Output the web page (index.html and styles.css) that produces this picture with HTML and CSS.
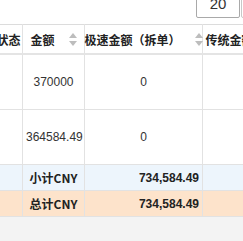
FILE: index.html
```html
<!DOCTYPE html>
<html lang="zh">
<head>
<meta charset="utf-8">
<link rel="stylesheet" href="styles.css">
</head>
<body>
<div class="page">
  <div class="toolbar">
    <div class="page-size">20</div>
    <div class="page-next"></div>
  </div>
  <table class="grid">
    <colgroup>
      <col class="c-status">
      <col class="c-amount">
      <col class="c-fast">
      <col class="c-trad">
    </colgroup>
    <thead>
      <tr>
        <th>状态</th>
        <th><div class="th-in"><span>金额</span><span class="sort"><i class="up"></i><i class="down"></i></span></div></th>
        <th><div class="th-in"><span>极速金额（拆单）</span><span class="sort"><i class="up"></i><i class="down"></i></span></div></th>
        <th><div class="th-in"><span>传统金额</span><span class="sort"><i class="up"></i><i class="down"></i></span></div></th>
      </tr>
    </thead>
    <tbody>
      <tr class="data">
        <td></td>
        <td class="center">370000</td>
        <td class="center">0</td>
        <td></td>
      </tr>
      <tr class="data">
        <td></td>
        <td class="center">364584.49</td>
        <td class="center">0</td>
        <td></td>
      </tr>
      <tr class="subtotal">
        <td></td>
        <td class="center label">小计CNY</td>
        <td class="right num">734,584.49</td>
        <td></td>
      </tr>
      <tr class="total">
        <td></td>
        <td class="center label">总计CNY</td>
        <td class="right num">734,584.49</td>
        <td></td>
      </tr>
    </tbody>
  </table>
  <div class="footer"></div>
</div>
</body>
</html>
```
FILE: styles.css
```css
html, body {
  margin: 0;
  padding: 0;
  background: #ffffff;
  overflow: hidden;
}
.page {
  width: 243px;
  height: 241px;
  overflow: hidden;
  font-family: "Liberation Sans", "Noto Sans CJK SC", Arial, sans-serif;
  font-size: 12px;
  color: #333333;
}
.toolbar {
  display: flex;
  justify-content: flex-end;
  gap: 1px;
  height: 28px;
  margin-top: -10px;
  margin-right: -30px;
}
.page-size {
  width: 44px;
  height: 28px;
  box-sizing: border-box;
  border: 1px solid #a9a9a9;
  border-radius: 2px;
  background: #fff;
  font-size: 15px;
  line-height: 25px;
  text-align: center;
  color: #333;
}
.page-next {
  width: 32px;
  height: 28px;
  box-sizing: border-box;
  border: 1px solid #c8c8c8;
  border-radius: 2px;
  background: #fff;
}
.grid {
  margin-top: 6px;
  margin-left: -6px;
  width: 284px;
  table-layout: fixed;
  border-collapse: collapse;
}
.c-status { width: 28px; }
.c-amount { width: 62px; }
.c-fast { width: 118px; }
.c-trad { width: 76px; }
.grid th {
  height: 28px;
  padding: 0;
  background: #ffffff;
  border-top: 1px solid #dcdcdc;
  border-left: 1px solid #e2e2e2;
  border-right: 1px solid #e2e2e2;
  border-bottom: 2px solid #e4e4e4;
  font-family: "Noto Sans CJK SC", "Liberation Sans", sans-serif;
  font-weight: bold;
  font-size: 12px;
  color: #222;
  text-align: center;
  white-space: nowrap;
}
.th-in {
  display: flex;
  justify-content: center;
  align-items: center;
  gap: 14px;
}
.sort {
  display: flex;
  flex-direction: column;
  align-items: center;
  gap: 3px;
  flex: none;
  width: 8px;
}
.sort i {
  display: block;
  width: 0;
  height: 0;
  border-left: 4px solid transparent;
  border-right: 4px solid transparent;
}
.sort .up {
  border-bottom: 5px solid #bdbdbd;
}
.sort .down {
  border-top: 5px solid #bdbdbd;
}
.grid td {
  padding: 0 3px;
  border: 1px solid #e2e2e2;
  white-space: nowrap;
  overflow: hidden;
}
.grid tr.data td {
  height: 54px;
  background: #ffffff;
}
.grid tr.subtotal td {
  height: 25px;
  background: #edf5fc;
}
.grid tr.total td {
  height: 25px;
  background: #fde3cb;
}
.center { text-align: center; }
.right { text-align: right; }
.label {
  font-family: "Noto Sans CJK SC", "Liberation Sans", sans-serif;
}
.label, .num {
  font-weight: bold;
  color: #222;
}
.footer {
  height: 30px;
  background: #f3f3f3;
}
```
